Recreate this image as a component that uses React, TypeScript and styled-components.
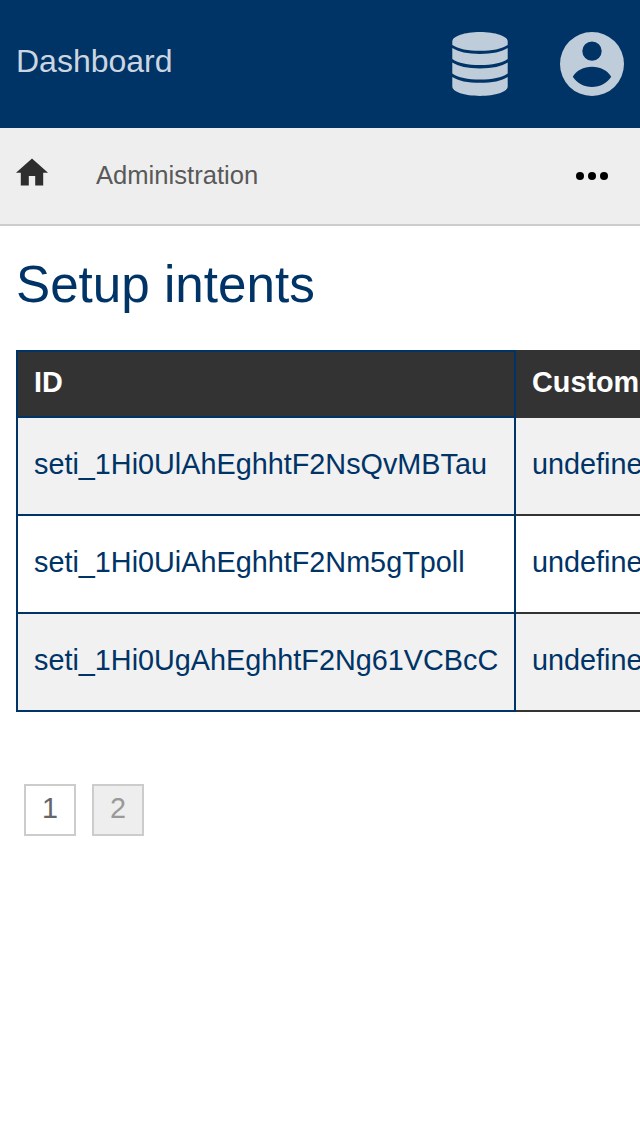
import React from 'react';
import styled, { createGlobalStyle } from 'styled-components';

const GlobalStyle = createGlobalStyle`
  *, *::before, *::after { box-sizing: border-box; }
  body {
    margin: 0;
    background: #fff;
    color: #003366;
    font-family: "Liberation Sans", Arial, sans-serif;
    font-size: 28.8px;
    overflow-x: hidden;
  }
`;

const Page = styled.div`
  width: 100%;
  min-height: 1136px;
  overflow: hidden;
`;

const Header = styled.header`
  display: flex;
  align-items: center;
  justify-content: space-between;
  height: 128px;
  padding: 0 16px;
  background: #003366;
`;

const Brand = styled.a`
  color: #ccd6e0;
  font-size: 32px;
  line-height: 40px;
  padding-bottom: 6px;
`;

const HeaderMenus = styled.div`
  display: flex;
  align-items: center;
  gap: 52px;
  color: #bfccd9;

  svg { display: block; }
`;

const Navbar = styled.nav`
  display: flex;
  align-items: center;
  height: 98px;
  padding: 0 32px 0 16px;
  background: #eee;
  border-bottom: 2px solid #ccc;

  svg { display: block; }
`;

const HomeLink = styled.a`
  color: #2e2e2e;
  padding-bottom: 8px;
`;

const Crumb = styled.a`
  flex: 1;
  margin-left: 48px;
  color: #595959;
  font-size: 25.6px;
  line-height: 32px;
  padding-bottom: 2px;
`;

const Content = styled.main`
  padding: 27px 0 0 16px;
`;

const Title = styled.h1`
  margin: 0 0 33px;
  font-size: 51.2px;
  font-weight: 400;
  line-height: 64px;
`;

const Table = styled.table`
  width: 760px;
  table-layout: fixed;
  border-collapse: collapse;
`;

const HeadCell = styled.th<{ $primary?: boolean }>`
  width: ${(p) => (p.$primary ? '498px' : 'auto')};
  height: 66px;
  padding: 0 16px 4px;
  border: 2px solid ${(p) => (p.$primary ? '#003366' : '#333')};
  background: #333;
  color: #fff;
  text-align: left;
  font-weight: 700;
`;

const Cell = styled.td<{ $primary?: boolean }>`
  height: 98px;
  padding: 0 16px 4px;
  border: 2px solid ${(p) => (p.$primary ? '#003366' : '#333')};
  white-space: nowrap;
`;

const Row = styled.tr`
  &:nth-child(odd) { background: #f1f1f1; }
`;

const Pagination = styled.div`
  display: flex;
  gap: 16px;
  padding: 72px 8px 0;
`;

const PageLink = styled.a<{ $current?: boolean }>`
  display: flex;
  justify-content: center;
  width: 52px;
  height: 52px;
  line-height: 45px;
  border: 2px solid #ccc;
  background: ${(p) => (p.$current ? '#eee' : '#fff')};
  color: ${(p) => (p.$current ? '#999' : '#666')};
`;

const DatabaseIcon = () => (
  <svg width="56" height="64" viewBox="0 0 56 64" fill="currentColor">
    <path d="M28 0C43.5 0 55.700 4.200 55.700 9.400V12.900C50 16.800 40 18.800 28 18.800S6 16.800 0.300 12.900V9.400C0.300 4.200 12.500 0 28 0Z" />
    <path d="M0.300 16.100C6 20 16 22 28 22S50 20 55.700 16.100V27C50 31 40 33.100 28 33.100S6 31 0.300 27Z" />
    <path d="M0.300 30.500C6 34.400 16 36.400 28 36.400S50 34.400 55.700 30.500V41.400C50 45.400 40 47.500 28 47.500S6 45.400 0.300 41.400Z" />
    <path d="M0.300 44.900C6 48.800 16 50.800 28 50.800S50 48.800 55.700 44.900V54.600C55.700 59.800 43.500 64 28 64S0.300 59.800 0.300 54.600Z" />
  </svg>
);

const AccountIcon = () => (
  <svg width="64" height="64" viewBox="0 0 64 64" fill="currentColor">
    <path
      fillRule="evenodd"
      d="M32 0a32 32 0 1 0 0 64a32 32 0 1 0 0-64zM32 9.400a9.700 9.700 0 1 1 0 19.400a9.700 9.700 0 1 1 0-19.400zM32 55C24 55 16.900 50.900 12.800 44.700C16.500 38.500 23.500 34.700 32 34.700S47.500 38.500 51.200 44.700C47.100 50.900 40 55 32 55z"
    />
  </svg>
);

const HomeIcon = () => (
  <svg width="32" height="28" viewBox="2 2.750 20 17.500" fill="currentColor">
    <path d="M10 20v-6h4v6h5v-8h3L12 3 2 12h3v8z" />
  </svg>
);

const MoreIcon = () => (
  <svg width="32" height="8" viewBox="0 0 32 8" fill="#000">
    <circle cx="4" cy="4" r="4" />
    <circle cx="16" cy="4" r="4" />
    <circle cx="28" cy="4" r="4" />
  </svg>
);

const intents = [
  'seti_1Hi0UlAhEghhtF2NsQvMBTau',
  'seti_1Hi0UiAhEghhtF2Nm5gTpoll',
  'seti_1Hi0UgAhEghhtF2Ng61VCBcC',
];

export default function App() {
  return (
    <Page>
      <GlobalStyle />
      <Header>
        <Brand>Dashboard</Brand>
        <HeaderMenus>
          <DatabaseIcon />
          <AccountIcon />
        </HeaderMenus>
      </Header>
      <Navbar>
        <HomeLink><HomeIcon /></HomeLink>
        <Crumb>Administration</Crumb>
        <MoreIcon />
      </Navbar>
      <Content>
        <Title>Setup intents</Title>
        <Table>
          <thead>
            <tr>
              <HeadCell $primary>ID</HeadCell>
              <HeadCell>Customer</HeadCell>
            </tr>
          </thead>
          <tbody>
            {intents.map((id) => (
              <Row key={id}>
                <Cell $primary>{id}</Cell>
                <Cell>undefined</Cell>
              </Row>
            ))}
          </tbody>
        </Table>
        <Pagination>
          <PageLink>1</PageLink>
          <PageLink $current>2</PageLink>
        </Pagination>
      </Content>
    </Page>
  );
}
